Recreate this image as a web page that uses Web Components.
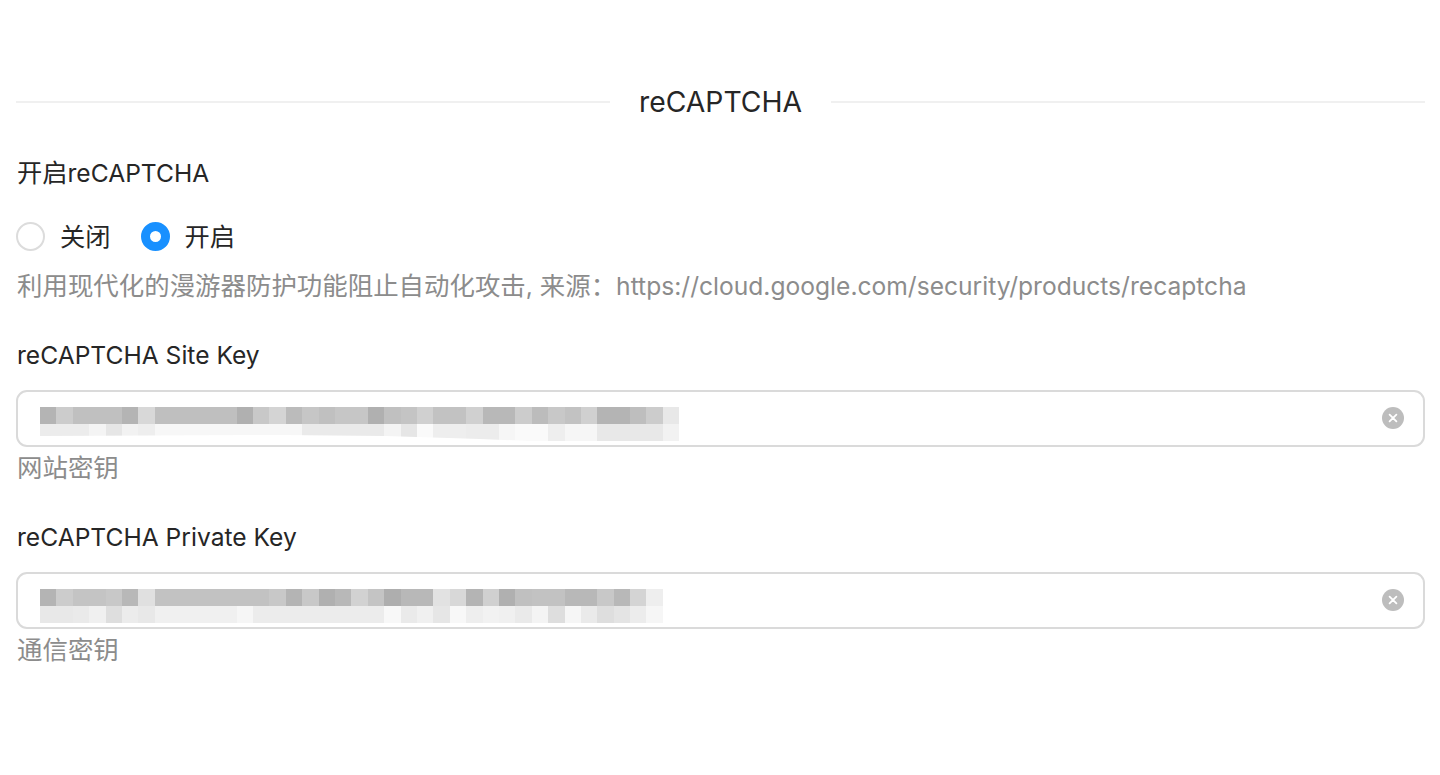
<!DOCTYPE html>
<html lang="zh">
<head>
<meta charset="utf-8">
<title>reCAPTCHA</title>
<style>
  html, body { margin: 0; background: #fff; }
  body { font-family: Inter, "Noto Sans CJK SC", sans-serif; color: #262626; }
</style>
</head>
<body>
<settings-page>
  <section-divider>reCAPTCHA</section-divider>

  <form-field label="开启reCAPTCHA" help="利用现代化的漫游器防护功能阻止自动化攻击, 来源：https://cloud.google.com/security/products/recaptcha">
    <radio-row>
      <radio-item>关闭</radio-item>
      <radio-item checked>开启</radio-item>
    </radio-row>
  </form-field>

  <form-field label="reCAPTCHA Site Key" help="网站密钥">
    <secret-input
      edge="0 12, 240px 11px, 345px 12px, 440px 15px, 490px 17px"
      row1="b4 cc c0 c0 c0 b4 d8 bf bf bf bf bf b0 c8 d4 bb c6 c0 c6 c6 b0 c0 c4 d0 c2 c2 d0 b8 b8 cc bc c8 c2 d0 b4 b4 be cc e8"
      row2="ec ec ec f4 e6 f2 ee f7 f7 f7 f7 f7 f7 f7 f7 f7 ea ea ea ea ea f4 e6 fa ee ee ec ec f6 fa fa ee f6 f6 e8 e8 e8 e8 f2"></secret-input>
  </form-field>

  <form-field label="reCAPTCHA Private Key" help="通信密钥">
    <secret-input
      row1="b4 cc c4 c4 c8 b8 e0 c2 c2 c2 c2 c2 c2 c2 c8 b4 c8 b0 b8 d2 c4 ae b8 b8 e2 d8 b4 d0 b0 c0 c2 c2 b8 b8 c8 b8 d4 ee"
      row2="e8 e8 ea f0 de ec e8 f0 f0 f0 f0 f0 f6 ec ec ec ec ec ec ec ec f8 ea f0 e6 f8 ee f2 f0 ea f4 de f6 ea de e4 ec f6"></secret-input>
  </form-field>
</settings-page>

<script>
  // CJK runs are set a little larger than the latin text around them
  const markCjk = (text) => text.replace(/[\u3000-\u9fff\uff00-\uffef]+/g, (m) => `<span class="zh">${m}</span>`);

  class SettingsPage extends HTMLElement {
    constructor() {
      super();
      this.attachShadow({ mode: 'open' });
      this.shadowRoot.innerHTML = `
        <style>
          :host {
            display: flex;
            flex-direction: column;
            gap: 28px;
            padding: 82px 15px 0 16px;
            font-size: 24.6px;
          }
        </style>
        <slot></slot>
      `;
    }
  }
  customElements.define('settings-page', SettingsPage);

  class SectionDivider extends HTMLElement {
    constructor() {
      super();
      this.attachShadow({ mode: 'open' });
      this.shadowRoot.innerHTML = `
        <style>
          :host {
            display: flex;
            align-items: center;
            gap: 29px;
            height: 40px;
            margin-bottom: 3px;
            font-size: 28.3px;
            color: #262626;
          }
          i { flex: 1; height: 2px; background: #f0f0f0; }
        </style>
        <i></i><span><slot></slot></span><i></i>
      `;
    }
  }
  customElements.define('section-divider', SectionDivider);

  class FormField extends HTMLElement {
    constructor() {
      super();
      this.attachShadow({ mode: 'open' });
      this.shadowRoot.innerHTML = `
        <style>
          :host { display: block; }
          .label, .help { padding-left: 1px; white-space: nowrap; }
          .label { height: 40px; line-height: 40px; margin-bottom: 15px; color: #262626; }
          .help { height: 42px; line-height: 42px; color: #8c8c8c; }
          .zh { font-size: 25.25px; }
          .help .zh { font-size: 25.45px; }
        </style>
        <div class="label">${markCjk(this.getAttribute('label'))}</div>
        <slot></slot>
        <div class="help">${markCjk(this.getAttribute('help'))}</div>
      `;
    }
  }
  customElements.define('form-field', FormField);

  class RadioRow extends HTMLElement {
    constructor() {
      super();
      this.attachShadow({ mode: 'open' });
      this.shadowRoot.innerHTML = `
        <style>
          :host { display: flex; align-items: center; gap: 30px; height: 57px; }
        </style>
        <slot></slot>
      `;
    }
  }
  customElements.define('radio-row', RadioRow);

  class RadioItem extends HTMLElement {
    constructor() {
      super();
      this.attachShadow({ mode: 'open' });
      this.shadowRoot.innerHTML = `
        <style>
          :host { display: inline-flex; align-items: center; gap: 15px; font-size: 25.25px; }
          .dot {
            box-sizing: border-box;
            width: 29px;
            height: 29px;
            border-radius: 50%;
            border: 2px solid #dcdcdc;
            background: #fff;
          }
          .text { margin-bottom: 4px; }
          :host([checked]) .dot { border: 9px solid #1890ff; }
        </style>
        <span class="dot"></span><span class="text"><slot></slot></span>
      `;
    }
  }
  customElements.define('radio-item', RadioItem);

  class SecretInput extends HTMLElement {
    constructor() {
      super();
      this.attachShadow({ mode: 'open' });
      // the key is pixelated out in the reference, so each row is a strip of grey cells
      const strip = (name) => this.getAttribute(name).split(' ')
        .map((c) => `<b style="background:#${c}${c}${c}"></b>`)
        .join('');
      const edge = this.getAttribute('edge');
      const clip = edge
        ? `clip-path: polygon(0 0, 100% 0, 100% 17px, ${edge.split(', ').reverse().map((p) => p.replace(/(\d)$/, '$1px')).join(', ')});`
        : '';
      this.shadowRoot.innerHTML = `
        <style>
          :host {
            display: flex;
            align-items: flex-start;
            justify-content: space-between;
            box-sizing: border-box;
            height: 57px;
            padding: 15px 19px 0 22px;
            border: 2px solid #dadada;
            border-radius: 11px;
            background: #fff;
          }
          .mask { display: flex; flex-direction: column; }
          .row { display: flex; height: 17px; }
          .row + .row { ${clip} }
          b { display: block; width: 16.4px; flex: none; }
          svg { display: block; }
        </style>
        <div class="mask">
          <div class="row">${strip('row1')}</div>
          <div class="row">${strip('row2')}</div>
        </div>
        <svg width="22" height="22" viewBox="0 0 22 22">
          <circle cx="11" cy="11" r="11" fill="#bdbdbd"/>
          <path d="M7.6 7.6l6.8 6.8M14.4 7.6l-6.8 6.8" stroke="#fff" stroke-width="1.8" stroke-linecap="round" fill="none"/>
        </svg>
      `;
    }
  }
  customElements.define('secret-input', SecretInput);
</script>
</body>
</html>
